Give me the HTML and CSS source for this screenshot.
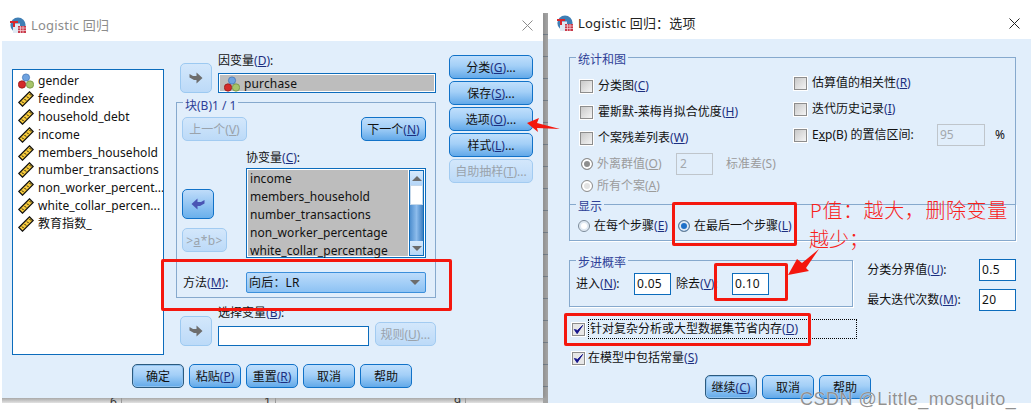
FILE: index.html
```html
<!DOCTYPE html>
<html lang="zh">
<head>
<meta charset="utf-8">
<title>Logistic 回归</title>
<link rel="stylesheet" href="styles.css">
</head>
<body>
<svg class="defs" width="0" height="0" aria-hidden="true">
  <symbol id="i-nom" viewBox="0 0 16 16">
    <circle cx="8" cy="4.5" r="3.6" fill="#6fa3e0" stroke="#3c6fb0" stroke-width=".7"/>
    <circle cx="4" cy="11.5" r="3.7" fill="#d42a2a" stroke="#8a1616" stroke-width=".7"/>
    <circle cx="12" cy="11.5" r="3.7" fill="#a6c46a" stroke="#6c8a3a" stroke-width=".7"/>
  </symbol>
  <symbol id="i-ruler" viewBox="0 0 16 16">
    <path d="M0.8 11.5 L11.5 0.8 L15.2 4.5 L4.5 15.2 Z" fill="#f5c93a" stroke="#111" stroke-width="1.2"/>
    <path d="M4 10.5 L5.6 12.1 M6.5 8 L8.1 9.6 M9 5.5 L10.6 7.1 M11.5 3 L13.1 4.6" stroke="#111" stroke-width="1"/>
  </symbol>
  <symbol id="i-app" viewBox="0 0 16 16">
    <circle cx="8" cy="8" r="7.6" fill="#3f7fb5"/>
    <path d="M3 6.5 H10 V16 H3 Z" fill="#dfe9f3"/>
    <path d="M0 4 H8 V6 H5 V10 H3 V6 H0 Z" fill="#d8262c"/>
    <path d="M8 9 H16 V16 H8 Z" fill="#c93a4a"/>
    <path d="M8 11 H16 M8 13.5 H16 M10.5 9 V16 M13 9 V16" stroke="#f3d9dc" stroke-width=".7"/>
  </symbol>
  <symbol id="i-go" viewBox="0 0 14 12">
    <path d="M0.5 2 L4 4 H7.5 V0.5 L13.5 6 L7.5 11.5 V8 H5 L0.5 5.5 Z"/>
  </symbol>
  <symbol id="i-close" viewBox="0 0 11 11">
    <path d="M.5 .5 L10.5 10.5 M10.5 .5 L.5 10.5" stroke="currentColor" fill="none"/>
  </symbol>
</svg>

<div class="sheet">
  <span class="sheet-n n1">6</span><span class="sheet-n n2">1</span><span class="sheet-n n3">9</span>
</div>

<section class="win win-left">
  <header class="titlebar inactive">
    <svg class="app-ico"><use href="#i-app"/></svg>
    <span class="title">Logistic 回归</span>
    <svg class="close"><use href="#i-close"/></svg>
  </header>
  <div class="dlg dlg-left">
    <div class="main">
      <ul class="varlist">
        <li><svg class="vi"><use href="#i-nom"/></svg>gender</li>
        <li><svg class="vi"><use href="#i-ruler"/></svg>feedindex</li>
        <li><svg class="vi"><use href="#i-ruler"/></svg>household_debt</li>
        <li><svg class="vi"><use href="#i-ruler"/></svg>income</li>
        <li><svg class="vi"><use href="#i-ruler"/></svg>members_household</li>
        <li><svg class="vi"><use href="#i-ruler"/></svg>number_transactions</li>
        <li><svg class="vi"><use href="#i-ruler"/></svg>non_worker_percent...</li>
        <li><svg class="vi"><use href="#i-ruler"/></svg>white_collar_percen...</li>
        <li><svg class="vi"><use href="#i-ruler"/></svg>教育指数_</li>
      </ul>

      <div class="middle">
        <div class="dep-row">
          <button class="arrow"><svg class="go"><use href="#i-go"/></svg></button>
          <div class="dep-col">
            <div class="lbl dep-lbl">因变量<span class="k">(<u>D</u>)</span>:</div>
            <div class="dep-field"><span class="dep-val"><svg class="vi"><use href="#i-nom"/></svg>purchase</span></div>
          </div>
        </div>

        <div class="group block">
          <span class="legend">块(B)1 / 1</span>
          <div class="nav-row">
            <button class="btn nav off">上一个(<u>V</u>)</button>
            <button class="btn nav">下一个<span class="k">(<u>N</u>)</span></button>
          </div>
          <div class="cov-row">
            <div class="cov-tools">
              <button class="arrow active"><svg class="go flip"><use href="#i-go"/></svg></button>
              <button class="btn ab off">&gt;<u>a</u>*b&gt;</button>
            </div>
            <div class="cov-col">
              <div class="lbl">协变量<span class="k">(<u>C</u>)</span>:</div>
              <div class="cov-list">
                <ul class="cov-items">
                  <li>income</li>
                  <li>members_household</li>
                  <li>number_transactions</li>
                  <li>non_worker_percentage</li>
                  <li>white_collar_percentage</li>
                </ul>
                <div class="scroll">
                  <span class="sc-btn"><i class="tri up"></i></span>
                  <span class="sc-thumb"></span>
                  <span class="sc-track"></span>
                  <span class="sc-btn"><i class="tri"></i></span>
                </div>
              </div>
            </div>
          </div>
          <div class="method-row">
            <span class="method-lbl">方法<span class="k">(<u>M</u>)</span>:</span>
            <div class="combo"><span>向后&#xFF1A;LR</span><i class="tri"></i></div>
          </div>
        </div>

        <div class="sel-row">
          <button class="arrow"><svg class="go"><use href="#i-go"/></svg></button>
          <div class="sel-col">
            <div class="lbl">选择变量<span class="k">(<u>B</u>)</span>:</div>
            <div class="textbox sel-input"></div>
          </div>
          <button class="btn rule off">规则(<u>U</u>)...</button>
        </div>
      </div>

      <div class="side">
        <button class="btn side-b">分类<span class="k">(<u>G</u>)</span>...</button>
        <button class="btn side-b">保存<span class="k">(<u>S</u>)</span>...</button>
        <button class="btn side-b">选项<span class="k">(<u>O</u>)</span>...</button>
        <button class="btn side-b">样式<span class="k">(<u>L</u>)</span>...</button>
        <button class="btn side-b off">自助抽样(<u>T</u>)...</button>
      </div>
    </div>
    <footer class="foot foot-left">
      <button class="btn act def">确定</button>
      <button class="btn act">粘贴<span class="k">(<u>P</u>)</span></button>
      <button class="btn act">重置<span class="k">(<u>R</u>)</span></button>
      <button class="btn act">取消</button>
      <button class="btn act">帮助</button>
    </footer>
  </div>
</section>

<section class="win win-right">
  <header class="titlebar">
    <svg class="app-ico"><use href="#i-app"/></svg>
    <span class="title">Logistic 回归&#xFF1A;选项</span>
    <svg class="close"><use href="#i-close"/></svg>
  </header>
  <div class="dlg dlg-right">
    <div class="group stats">
      <span class="legend">统计和图</span>
      <div class="stats-left">
        <div class="opt"><i class="chk"></i><span>分类图<span class="k">(<u>C</u>)</span></span></div>
        <div class="opt"><i class="chk"></i><span>霍斯默-莱梅肖拟合优度<span class="k">(<u>H</u>)</span></span></div>
        <div class="opt"><i class="chk"></i><span>个案残差列表<span class="k">(<u>W</u>)</span></span></div>
        <div class="sub off-t"><i class="rad dot"></i><span class="sub-l">外离群值(<u>O</u>)</span><span class="textbox dim">2</span><span class="sub-u">标准差(S)</span></div>
        <div class="sub off-t"><i class="rad"></i><span class="sub-l">所有个案(<u>A</u>)</span></div>
      </div>
      <div class="stats-right">
        <div class="opt"><i class="chk"></i><span>估算值的相关性<span class="k">(<u>R</u>)</span></span></div>
        <div class="opt"><i class="chk"></i><span>迭代历史记录<span class="k">(<u>I</u>)</span></span></div>
        <div class="opt"><i class="chk"></i><span class="exp">E<u>x</u>p(B) 的置信区间:</span><span class="textbox dim ci">95</span><span class="pct">%</span></div>
      </div>
    </div>

    <div class="group display">
      <span class="legend">显示</span>
      <div class="radopt r1"><i class="rad on-ring"></i><span>在每个步骤<span class="k">(<u>E</u>)</span></span></div>
      <div class="radopt"><i class="rad sel"></i><span>在最后一个步骤<span class="k">(<u>L</u>)</span></span></div>
    </div>

    <div class="prob-row">
      <div class="group step">
        <span class="legend">步进概率</span>
        <span class="s-l1">进入<span class="k">(<u>N</u>)</span>:</span>
        <span class="textbox num">0.05</span>
        <span class="s-l2">除去<span class="k">(<u>V</u>)</span>:</span>
        <span class="textbox num">0.10</span>
      </div>
      <div class="extra">
        <div class="ex-row"><span>分类分界值<span class="k">(<u>U</u>)</span>:</span><span class="textbox num">0.5</span></div>
        <div class="ex-row"><span>最大迭代次数<span class="k">(<u>M</u>)</span>:</span><span class="textbox num">20</span></div>
      </div>
    </div>

    <div class="opt2 first"><i class="chk ticked"><svg viewBox="0 0 12 12"><path d="M1.5 6 L4.5 10.5 L10.5 1.5 L5 7 Z" fill="#14148c" stroke="#14148c"/></svg></i><span class="focus">针对复杂分析或大型数据集节省内存<span class="k">(<u>D</u>)</span></span></div>
    <div class="opt2"><i class="chk ticked"><svg viewBox="0 0 12 12"><path d="M1.5 6 L4.5 10.5 L10.5 1.5 L5 7 Z" fill="#14148c" stroke="#14148c"/></svg></i><span>在模型中包括常量<span class="k">(<u>S</u>)</span></span></div>

    <footer class="foot foot-right">
      <button class="btn act def">继续<span class="k">(<u>C</u>)</span></button>
      <button class="btn act">取消</button>
      <button class="btn act">帮助</button>
    </footer>
  </div>
</section>

<div class="mark m-a"></div>
<div class="mark m-b"></div>
<div class="mark m-c"></div>
<div class="mark m-d"></div>
<svg class="arrows" width="1031" height="419" aria-hidden="true">
  <polygon points="527,123 539,118 537,123 560,129 537,128 538,132"/>
  <polygon points="788,275 797,259 802,263 819,249 806,268 809,271"/>
</svg>
<p class="note n-a">P值&#xFF1A;越大&#xFF0C;删除变量</p>
<p class="note n-b">越少&#xFF1B;</p>
<p class="wm">CSDN @Little_mosquito_</p>
</body>
</html>
```
FILE: styles.css
```css
* { box-sizing: border-box; }
html, body { margin: 0; padding: 0; }
body {
  width: 1031px; height: 419px; position: relative; overflow: hidden;
  background: #fff; color: #111;
  font: 12px/18px "Noto Sans", "Noto Sans CJK SC", sans-serif;
}
ul { list-style: none; margin: 0; padding: 0; }
u { text-decoration: underline; text-underline-offset: 1px; }
.defs { position: absolute; }
button { font: inherit; color: inherit; margin: 0; padding: 0; }

/* spreadsheet peeking out behind the dialogs */
.sheet {
  position: absolute; left: 2px; top: 13px; width: 546px; height: 390px; overflow: hidden;
  background:
    repeating-linear-gradient(to bottom, #a3a3a3 0 21px, #77818b 21px 22px) right top / 5px 100% no-repeat,
    linear-gradient(#a9a9a9, #e2e2e2) left bottom / 100% 5px no-repeat;
}
.sheet-n { position: absolute; top: 382px; font-size: 12px; line-height: 14px; color: #333; padding-right: 4px; border-right: 1px solid #999; height: 20px; }
.n1 { left: 108px; } .n2 { left: 262px; } .n3 { left: 452px; }

/* windows */
.win { position: absolute; }
.win-left { left: 2px; top: 13px; width: 541px; height: 385px; box-shadow: 2px 0 3px rgba(0,0,0,.12); clip-path: inset(0 -6px 0 0); }
.win-right { left: 548px; top: 11px; width: 483px; height: 392px; }
.titlebar { display: flex; align-items: center; height: 28px; background: #fff; color: #222; }
.titlebar.inactive { color: #8c8c8c; }
.win-left .titlebar { padding: 0 10px 4px 8px; }
.win-right .titlebar { padding: 0 11px 4px 9px; }
.app-ico { width: 16px; height: 16px; flex: none; }
.title { margin-left: 5px; font-size: 13px; flex: 1; letter-spacing: .2px; }
.close { width: 11px; height: 11px; }
.dlg { background: #e1eefb; }
.dlg-left { height: 357px; padding-left: 10px; }
.dlg-right { height: 364px; padding: 18px 15px 0 21px; }

/* left dialog */
.main { display: flex; height: 314px; padding-top: 14px; }
.varlist {
  width: 152px; height: 286px; margin: 14px 12px 0 0; padding-top: 2px;
  background: #fff; border: 1px solid #0c6cbc; overflow: hidden;
}
.varlist li { display: flex; align-items: center; height: 17.9px; padding-left: 5px; white-space: nowrap; letter-spacing: .05px; }
.vi { width: 16px; height: 16px; margin-right: 4px; flex: none; }
.middle { width: 260px; margin-right: 13px; }
.dep-row { display: flex; align-items: flex-end; height: 38px; padding-left: 4px; gap: 6px; }
.dep-col { flex: 1; }
.lbl { white-space: nowrap; }
.dep-lbl { margin-bottom: 3px; }
.dep-field { height: 20px; border: 1px solid #0c6cbc; padding: 1px; background: #fff; }
.dep-val { display: flex; align-items: center; height: 16px; background: #bdbdbd; padding: 2px 0 0 4px; letter-spacing: .15px; }
.arrow {
  display: flex; align-items: center; justify-content: center; width: 32px; height: 30px; flex: none;
  background: linear-gradient(#d3e7fb, #bcdaf8); border: 1px solid #9cc9f1; border-radius: 5px;
}
.arrow.active { background: linear-gradient(#bfdcfa, #6ab0ec); border-color: #1172c8; }
.go { width: 14px; height: 12px; fill: #6d6d6d; }
.arrow.active .go { fill: #4a55b4; }
.flip { transform: scaleX(-1); }

.group { position: relative; border: 1px solid #86a9cd; }
.legend { position: absolute; left: 6px; top: -6px; padding: 0 2px; background: #e1eefb; color: #2e3f97; line-height: 15px; white-space: nowrap; }
.block { height: 196px; margin-top: 9px; padding: 14px 9px 0 5px; }
.block .legend { top: -5px; }
.nav-row { display: flex; justify-content: space-between; }
.btn {
  display: block; white-space: nowrap; text-align: center; line-height: 20px; padding-top: 1px;
  background: linear-gradient(#c0dffc 0%, #a3cff7 45%, #62a9e9 100%);
  border: 1px solid #1172c8; border-radius: 5px; color: #111;
}
.btn.off { background: linear-gradient(#d3e7fb, #bcdaf8); border-color: #a2cbf1; color: #9aa3ac; }
.btn.def { border-color: #2c5a7e; box-shadow: inset 0 0 0 1px #8fc2ef; }
.k { color: #1c2f80; }
.nav { width: 65px; height: 24px; }
.cov-row { display: flex; }
.cov-tools { width: 64px; padding-top: 48px; }
.ab { width: 45px; height: 24px; margin-top: 9px; letter-spacing: .4px; }
.cov-col { width: 180px; padding-top: 7px; }
.cov-col .lbl { padding-top: 1px; height: 18px; }
.cov-list { display: flex; height: 90px; margin-top: 2px; border: 1px solid #0c6cbc; padding: 1px; background: #fff; }
.cov-items { flex: 1; background: #bdbdbd; padding: 0 0 0 2px; letter-spacing: .05px; }
.scroll { display: flex; flex-direction: column; width: 15px; margin-left: 1px; border: 1px solid #0c6cbc; }
.sc-btn { display: flex; align-items: center; justify-content: center; height: 14px; background: linear-gradient(#d6e9fc, #b5d6f7); }
.sc-thumb { height: 20px; background: #fff; border: 1px solid #c5d8ea; }
.sc-track { flex: 1; background: linear-gradient(to right, #4f8fcf, #8dbcec 50%, #3d7ec0); }
.tri { display: block; width: 0; height: 0; border-left: 5px solid transparent; border-right: 5px solid transparent; border-top: 5px solid #6c6c6c; }
.tri.up { border-top: 0; border-bottom: 5px solid #6c6c6c; }
.method-row { display: flex; align-items: center; margin-top: 14px; }
.method-lbl { width: 64px; padding: 1px 0 0 1px; }
.combo {
  display: flex; align-items: center; justify-content: space-between; width: 180px; height: 21px; padding: 0 5px 0 2px;
  background: linear-gradient(#bcdcfb, #8dc2f3); border: 1px solid #3b8fdb; border-radius: 2px; letter-spacing: .2px;
}
.sel-row { display: flex; align-items: flex-end; height: 42px; margin-top: 6px; padding-left: 4px; }
.sel-col { margin-left: 6px; width: 152px; }
.textbox { display: block; background: #fff; border: 1px solid #0c6cbc; }
.sel-input { height: 20px; margin-top: 4px; }
.rule { width: 62px; height: 24px; margin-left: 6px; }
.side { display: flex; flex-direction: column; gap: 2px; }
.side-b { width: 84px; height: 24px; }
.foot { display: flex; gap: 5px; }
.foot-left { padding-left: 120px; margin-top: 9px; }
.act { width: 52px; height: 24px; }

/* right dialog */
.stats { display: flex; height: 147px; border-bottom: 0; padding: 12px 0 0 10px; }
.stats-left { width: 214px; padding-top: 3px; }
.opt { display: flex; align-items: center; height: 26px; white-space: nowrap; }
.chk {
  display: block; width: 13px; height: 13px; margin-right: 5px; flex: none;
  background: linear-gradient(135deg, #c9c9c9, #f4f4f4); border: 1px solid #8d8d8d; box-shadow: 0 0 0 1px #fff;
}
.chk svg { display: block; width: 11px; height: 11px; }
.chk.ticked { background: #e7e7e7; }
.sub { display: flex; align-items: center; height: 22px; padding-left: 1px; white-space: nowrap; margin-top: 2px; }
.sub + .sub { margin-top: 0; }
.off-t { color: #9b9b9b; }
.rad { display: block; flex: none; width: 12px; height: 12px; border-radius: 50%; background: #e3e3e3; border: 1px solid #8e8e8e; box-shadow: inset 0 0 0 2px #fff; margin-right: 4px; }
.rad.dot { background: #8e8e8e; }
.rad.on-ring { box-shadow: inset 0 0 0 2px #dfe9f3; background: #fff; border-color: #7a8a9a; }
.rad.sel { background: #1e70c8; box-shadow: inset 0 0 0 2px #dfe9f3; border-color: #6c7f92; }
.sub-l { width: 79px; }
.dim { border-color: #bfc5cb; background: #e1eefb; color: #a3a8ad; }
.sub .dim { width: 37px; height: 22px; line-height: 20px; padding-left: 3px; }
.sub-u { margin-left: 13px; }
.exp { width: 125px; }
.ci { width: 48px; height: 22px; line-height: 20px; padding-left: 2px; }
.pct { margin-left: 10px; }
.display { display: flex; align-items: center; height: 37px; padding: 6px 0 0 8px; box-shadow: 1px 1px 0 #fff; }
.r1 { width: 100px; }
.radopt { display: flex; align-items: center; white-space: nowrap; }
.prob-row { display: flex; height: 47px; margin-top: 19px; }
.step { display: flex; align-items: center; width: 285px; height: 47px; padding: 1px 0 0 6px; box-shadow: 1px 1px 0 #fff; }
.s-l1 { width: 58px; white-space: nowrap; }
.s-l2 { width: 56px; margin-left: 5px; white-space: nowrap; }
.num { width: 37px; height: 22px; line-height: 20px; padding-left: 2px; letter-spacing: .3px; }
.extra { margin: -1px 0 0 14px; width: 149px; }
.ex-row { display: flex; justify-content: space-between; align-items: center; height: 22px; margin-bottom: 8px; white-space: nowrap; }
.opt2 { display: flex; align-items: center; height: 20px; padding-left: 3px; white-space: nowrap; }
.first { margin-top: 12px; }
.opt2 + .opt2 { margin-top: 9px; }
.opt2 .chk { margin-right: 3px; }
.focus { display: block; width: 269px; height: 20px; border: 1px dotted #000; padding-left: 1px; }
.foot-right { padding-left: 136px; margin-top: 7px; }

/* annotations on top of the screenshot */
.mark { position: absolute; border: 3px solid #f4170e; border-radius: 2px; }
.m-a { left: 161px; top: 259px; width: 291px; height: 52px; }
.m-b { left: 672px; top: 202px; width: 125px; height: 44px; }
.m-c { left: 714px; top: 263px; width: 74px; height: 38px; }
.m-d { left: 564px; top: 313px; width: 247px; height: 33px; }
.arrows { position: absolute; left: 0; top: 0; }
.arrows polygon { fill: #f4170e; }
.note { position: absolute; margin: 0; color: #f8211a; font-size: 20px; line-height: 26px; white-space: nowrap; font-weight: 300; }
.n-a { left: 810px; top: 198px; letter-spacing: .6px; }
.n-b { left: 809px; top: 227px; }
.wm { position: absolute; left: 800px; top: 388px; margin: 0; font: 18px/22px "Liberation Sans", sans-serif; letter-spacing: .5px; color: rgba(125,125,125,.85); text-shadow: 0 0 1px #fff; white-space: nowrap; }
```
